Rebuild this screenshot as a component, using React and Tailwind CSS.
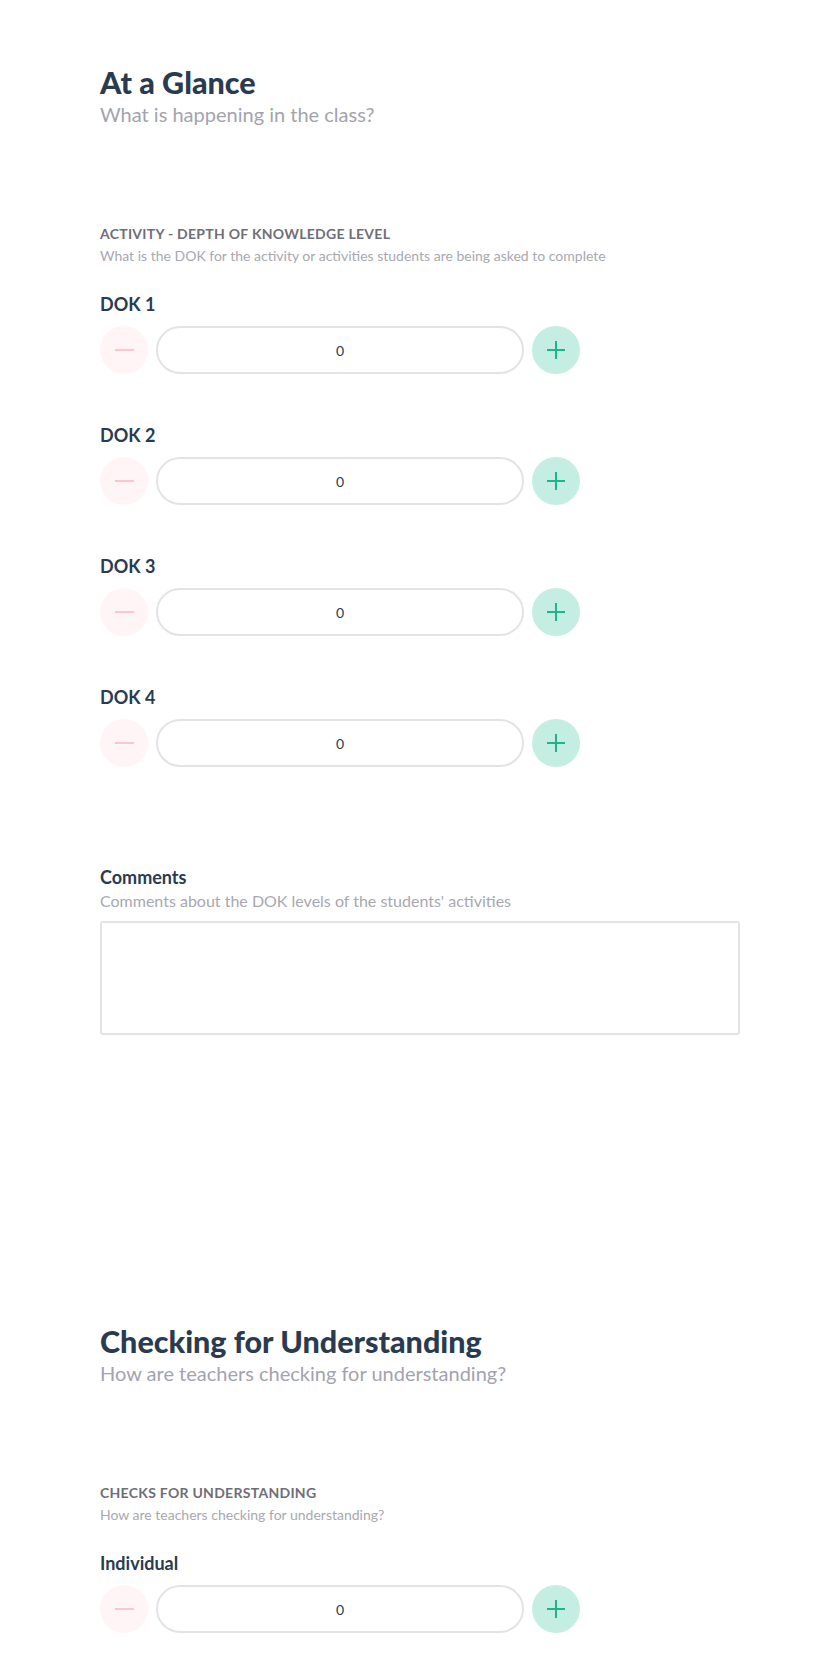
import React, { useState } from 'react'

function Stepper({ label }) {
  const [value, setValue] = useState(0)
  return (
    <div>
      <div className="text-[18px] leading-7 font-bold text-[#2a3b50]">{label}</div>
      <div className="mt-2 flex items-center gap-2 w-[480px]">
        <button
          type="button"
          onClick={() => setValue((v) => Math.max(0, v - 1))}
          className="w-12 h-12 shrink-0 rounded-full bg-[#fff5f6] flex items-center justify-center"
        >
          <span className="block w-[19px] h-[2px] bg-[#fbc6ce]" />
        </button>
        <div className="flex-1 h-12 rounded-full border-2 border-[#e3e3e6] flex items-center justify-center text-[14px] text-[#2a3b50]">
          {value}
        </div>
        <button
          type="button"
          onClick={() => setValue((v) => v + 1)}
          className="w-12 h-12 shrink-0 rounded-full bg-[#c5eee2] flex items-center justify-center"
        >
          <svg width="20" height="20" viewBox="0 0 20 20">
            <path d="M10 1v18M1 10h18" stroke="#1fb48e" strokeWidth="2" />
          </svg>
        </button>
      </div>
    </div>
  )
}

function SectionHeader({ title, subtitle }) {
  return (
    <div>
      <h1 className="text-[30.5px] leading-9 font-black text-[#2a3b50]">{title}</h1>
      <p className="text-[20px] leading-7 text-[#a3a3ac]">{subtitle}</p>
    </div>
  )
}

function GroupHeader({ label, description }) {
  return (
    <div className="mt-24">
      <div className="text-[14px] leading-5 font-bold uppercase tracking-[0.02em] text-[#6e6e78]">{label}</div>
      <div className="mt-[2px] text-[14px] leading-5 text-[#a8a8b0]">{description}</div>
    </div>
  )
}

export default function App() {
  const levels = ['DOK 1', 'DOK 2', 'DOK 3', 'DOK 4']

  return (
    <div className="min-h-screen bg-white font-['Lato',sans-serif]">
      <div className="w-[640px] mx-auto pt-16 pb-10">
        <SectionHeader title="At a Glance" subtitle="What is happening in the class?" />
        <GroupHeader
          label="Activity - Depth of Knowledge Level"
          description="What is the DOK for the activity or activities students are being asked to complete"
        />
        <div className="mt-6 flex flex-col gap-[47px]">
          {levels.map((l) => (
            <Stepper key={l} label={l} />
          ))}
        </div>

        <div className="mt-24">
          <div className="text-[18px] leading-7 font-bold text-[#2a3b50]">Comments</div>
          <div className="text-[16px] leading-5 text-[#a8a8b0]">Comments about the DOK levels of the students' activities</div>
          <textarea className="mt-[10px] block w-full h-[114px] border-2 border-[#e3e3e6] rounded-[3px] resize-none outline-none p-2" />
        </div>

        <div className="mt-72">
          <SectionHeader title="Checking for Understanding" subtitle="How are teachers checking for understanding?" />
          <GroupHeader label="Checks for Understanding" description="How are teachers checking for understanding?" />
          <div className="mt-6">
            <Stepper label="Individual" />
          </div>
        </div>
      </div>
    </div>
  )
}
